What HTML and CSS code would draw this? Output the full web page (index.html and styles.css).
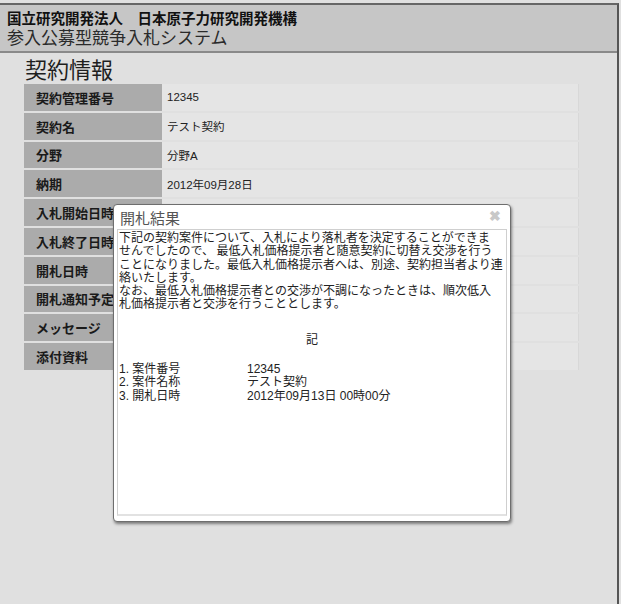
FILE: index.html
```html
<!DOCTYPE html>
<html lang="ja">
<head>
    <meta charset="UTF-8">
    <title>契約情報</title>
    <link rel="stylesheet" href="styles.css">
</head>
<body>
<div class="frame">
    <!-- ヘッダー -->
    <div class="header">
        <div class="org">国立研究開発法人　日本原子力研究開発機構</div>
        <div class="system">参入公募型競争入札システム</div>
    </div>

    <div class="main">
        <h1 class="title">契約情報</h1>
        <table class="info">
            <tr><th>契約管理番号</th><td>12345</td></tr>
            <tr><th>契約名</th><td>テスト契約</td></tr>
            <tr><th>分野</th><td>分野A</td></tr>
            <tr><th>納期</th><td>2012年09月28日</td></tr>
            <tr><th>入札開始日時</th><td></td></tr>
            <tr><th>入札終了日時</th><td></td></tr>
            <tr><th>開札日時</th><td></td></tr>
            <tr><th>開札通知予定日</th><td></td></tr>
            <tr><th>メッセージ</th><td></td></tr>
            <tr><th>添付資料</th><td></td></tr>
        </table>

        <!-- 開札結果ダイアログ -->
        <div class="dialog">
            <div class="dialog-head">
                <span class="dialog-title">開札結果</span>
                <span class="dialog-close">&#10006;</span>
            </div>
            <div class="dialog-body">
                <p class="notice">下記の契約案件について、入札により落札者を決定することができま<br>せんでしたので、 最低入札価格提示者と随意契約に切替え交渉を行う<br>ことになりました。最低入札価格提示者へは、別途、契約担当者より連<br>絡いたします。<br>なお、最低入札価格提示者との交渉が不調になったときは、順次低入<br>札価格提示者と交渉を行うこととします。</p>
                <p class="ki">記</p>
                <ul class="items">
                    <li><span class="item-label">1. 案件番号</span><span>12345</span></li>
                    <li><span class="item-label">2. 案件名称</span><span>テスト契約</span></li>
                    <li><span class="item-label">3. 開札日時</span><span>2012年09月13日 00時00分</span></li>
                </ul>
            </div>
        </div>
    </div>
</div>
</body>
</html>
```

FILE: styles.css
```css
* {
    margin: 0;
    padding: 0;
    box-sizing: border-box;
}

html, body {
    height: 100%;
}

body {
    background: #e0e0e0;
    font-family: "Liberation Sans", "Noto Sans CJK JP", sans-serif;
    color: #222;
}

ul {
    list-style: none;
}

.frame {
    width: 619px;
    height: 601px;
    margin-top: 3px;
    border-top: 2px solid #666;
    border-right: 2px solid #555;
    background: #e0e0e0;
}

.header {
    height: 48px;
    padding: 5px 7px 0;
    background: #c6c6c6;
    border-bottom: 2px solid #8a8a8a;
}

.org {
    font-size: 14.5px;
    font-weight: bold;
    line-height: 18px;
    color: #111;
}

.system {
    font-size: 17px;
    line-height: 21px;
    color: #2a2a2a;
}

.main {
    position: relative;
    padding: 5px 0 0 24px;
}

.title {
    font-size: 22px;
    font-weight: normal;
    line-height: 26px;
    padding-left: 1px;
    color: #1e1e1e;
}

.info {
    width: 555px;
    border-collapse: separate;
    border-spacing: 0 2px;
    margin-top: -2px;
}

.info th,
.info td {
    height: 26.8px;
    text-align: left;
    white-space: nowrap;
}

.info th {
    width: 138px;
    padding-left: 12px;
    background: #ababab;
    font-size: 13px;
    font-weight: bold;
    color: #1a1a1a;
}

.info td {
    padding-left: 5px;
    background: #e5e5e5;
    font-size: 11.5px;
    color: #222;
    border-right: 1px solid #d8d8d8;
}

.dialog {
    position: absolute;
    left: 113px;
    top: 151px;
    width: 398px;
    height: 318px;
    padding: 0 3px 5px;
    background: #fff;
    border: 1px solid #6e6e6e;
    border-radius: 4px;
    box-shadow: 1px 2px 3px rgba(0, 0, 0, 0.45);
    display: flex;
    flex-direction: column;
}

.dialog-head {
    height: 24px;
    display: flex;
    align-items: center;
    justify-content: space-between;
    padding: 0 6px 0 3px;
}

.dialog-title {
    font-size: 15px;
    color: #555;
}

.dialog-close {
    font-size: 14px;
    font-weight: bold;
    color: #c8c8c8;
    margin-top: -3px;
}

.dialog-body {
    flex: 1;
    border: 1px solid #cfcfcf;
    border-bottom: 2px solid #e2e2e2;
    padding: 0 1px;
    font-size: 12px;
    line-height: 13.3px;
    white-space: nowrap;
}

.notice {
    font-family: "Noto Sans CJK JP", sans-serif;
}

.ki {
    text-align: center;
    margin-top: 22px;
    font-family: "Noto Sans CJK JP", sans-serif;
}

.items {
    margin-top: 18px;
}

.items li {
    display: flex;
}

.item-label {
    width: 128px;
}
```
